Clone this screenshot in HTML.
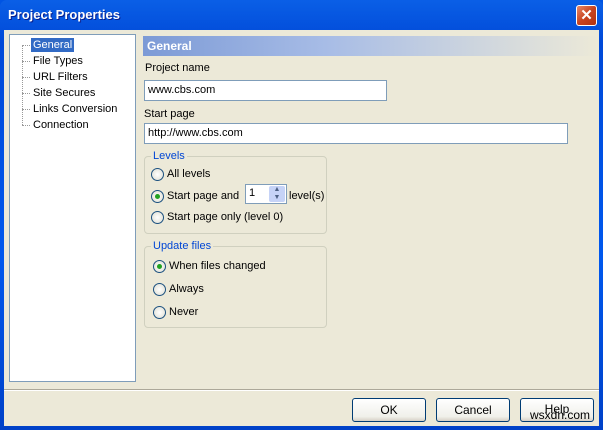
<!DOCTYPE html>
<html><head><style>
*{box-sizing:border-box;margin:0;padding:0}
body{width:603px;height:430px;overflow:hidden;font-family:"Liberation Sans",sans-serif;font-size:11px;color:#000;background:#0054e3;position:relative}
.win{position:absolute;left:0;top:0;width:603px;height:430px;background:linear-gradient(#0a5fe6,#0049d8 10%,#0058ee 60%,#0041c8);border-radius:7px 7px 0 0}
.title{position:absolute;left:8px;top:7px;color:#fff;font-weight:bold;font-size:13px;text-shadow:1px 1px #0a1e8c}
.close{position:absolute;left:576px;top:5px;width:21px;height:21px;border:1px solid #fff;border-radius:3px;background:linear-gradient(135deg,#e8896a,#c8431f 50%,#b33210);color:#fff;font-size:15px;font-weight:bold;text-align:center;line-height:19px}
.body{position:absolute;left:4px;top:30px;width:595px;height:396px;background:#ece9d8}
.a{position:absolute}
.tree{left:9px;top:34px;width:127px;height:348px;background:#fff;border:1px solid #7f9db9}
.tree div{position:absolute;left:23px;height:14px;line-height:14px}
.dot{position:absolute;border-top:1px dotted #999}
.hdr{left:143px;top:36px;width:455px;height:20px;background:linear-gradient(90deg,#7c9ad6,#a7bce6 40%,#ece9d8);color:#fff;font-weight:bold;font-size:12px;padding:3px 0 0 4px}
.inp{background:#fff;border:1px solid #7f9db9;height:21px;padding:3px 3px;}
.grp{border:1px solid #d0d0bf;border-radius:4px}
.lg{position:absolute;background:#ece9d8;color:#0046d5;padding:0 2px;top:-7px;left:6px}
.rad{position:absolute;width:13px;height:13px;border:1px solid #1c5180;border-radius:50%;background:radial-gradient(#fff,#dcdcd0)}
.rad.on::after{content:"";position:absolute;left:3px;top:3px;width:5px;height:5px;border-radius:50%;background:#21a121}
.btn{position:absolute;top:398px;width:74px;height:24px;border:1px solid #003c74;border-radius:3px;background:linear-gradient(#fff,#f0f0ea 80%,#d6d0c5);text-align:center;line-height:22px;font-size:12px}
</style></head><body>
<div class="win"></div>
<div class="title">Project Properties</div>
<div class="close">✕</div>
<div class="body"></div>
<div class="a tree">
 <div style="top:3px;background:#316ac5;color:#fff;padding:0 2px;left:21px">General</div>
 <div style="top:19px">File Types</div>
 <div style="top:35px">URL Filters</div>
 <div style="top:51px">Site Secures</div>
 <div style="top:67px">Links Conversion</div>
 <div style="top:83px">Connection</div>
 <span class="a" style="left:12px;top:10px;height:80px;border-left:1px dotted #999"></span>
 <span class="dot" style="left:12px;top:10px;width:8px"></span>
 <span class="dot" style="left:12px;top:26px;width:8px"></span>
 <span class="dot" style="left:12px;top:42px;width:8px"></span>
 <span class="dot" style="left:12px;top:58px;width:8px"></span>
 <span class="dot" style="left:12px;top:74px;width:8px"></span>
 <span class="dot" style="left:12px;top:90px;width:8px"></span>
</div>
<div class="a hdr">General</div>
<div class="a" style="left:145px;top:62px">Project name</div>
<div class="a inp" style="left:144px;top:80px;width:243px">www.cbs.com</div>
<div class="a" style="left:144px;top:108px">Start page</div>
<div class="a inp" style="left:144px;top:123px;width:424px">http://www.cbs.com</div>
<div class="a grp" style="left:144px;top:156px;width:183px;height:78px">
 <span class="lg">Levels</span>
 <span class="rad" style="left:6px;top:11px"></span><span class="a" style="left:22px;top:11px">All levels</span>
 <span class="rad on" style="left:6px;top:33px"></span><span class="a" style="left:22px;top:33px">Start page and</span>
 <span class="a" style="left:100px;top:27px;width:42px;height:20px;background:#fff;border:1px solid #7f9db9;padding:2px 3px">1</span>
 <span class="a" style="left:124px;top:29px;width:16px;height:16px;background:#c6d3f7;border-radius:2px;font-size:7px;color:#4d6185;text-align:center;line-height:8px">▲<br>▼</span>
 <span class="a" style="left:144px;top:33px">level(s)</span>
 <span class="rad" style="left:6px;top:54px"></span><span class="a" style="left:22px;top:54px">Start page only (level 0)</span>
</div>
<div class="a grp" style="left:144px;top:246px;width:183px;height:82px">
 <span class="lg">Update files</span>
 <span class="rad on" style="left:8px;top:13px"></span><span class="a" style="left:24px;top:13px">When files changed</span>
 <span class="rad" style="left:8px;top:36px"></span><span class="a" style="left:24px;top:36px">Always</span>
 <span class="rad" style="left:8px;top:59px"></span><span class="a" style="left:24px;top:59px">Never</span>
</div>
<div class="a" style="left:4px;top:389px;width:595px;border-top:1px solid #aca899;border-bottom:1px solid #fff"></div>
<div class="btn" style="left:352px">OK</div>
<div class="btn" style="left:436px">Cancel</div>
<div class="btn" style="left:520px;line-height:20px">Help<span class="a" style="left:9px;top:6px;font-size:12px">wsxdn.com</span></div>
</body></html>
